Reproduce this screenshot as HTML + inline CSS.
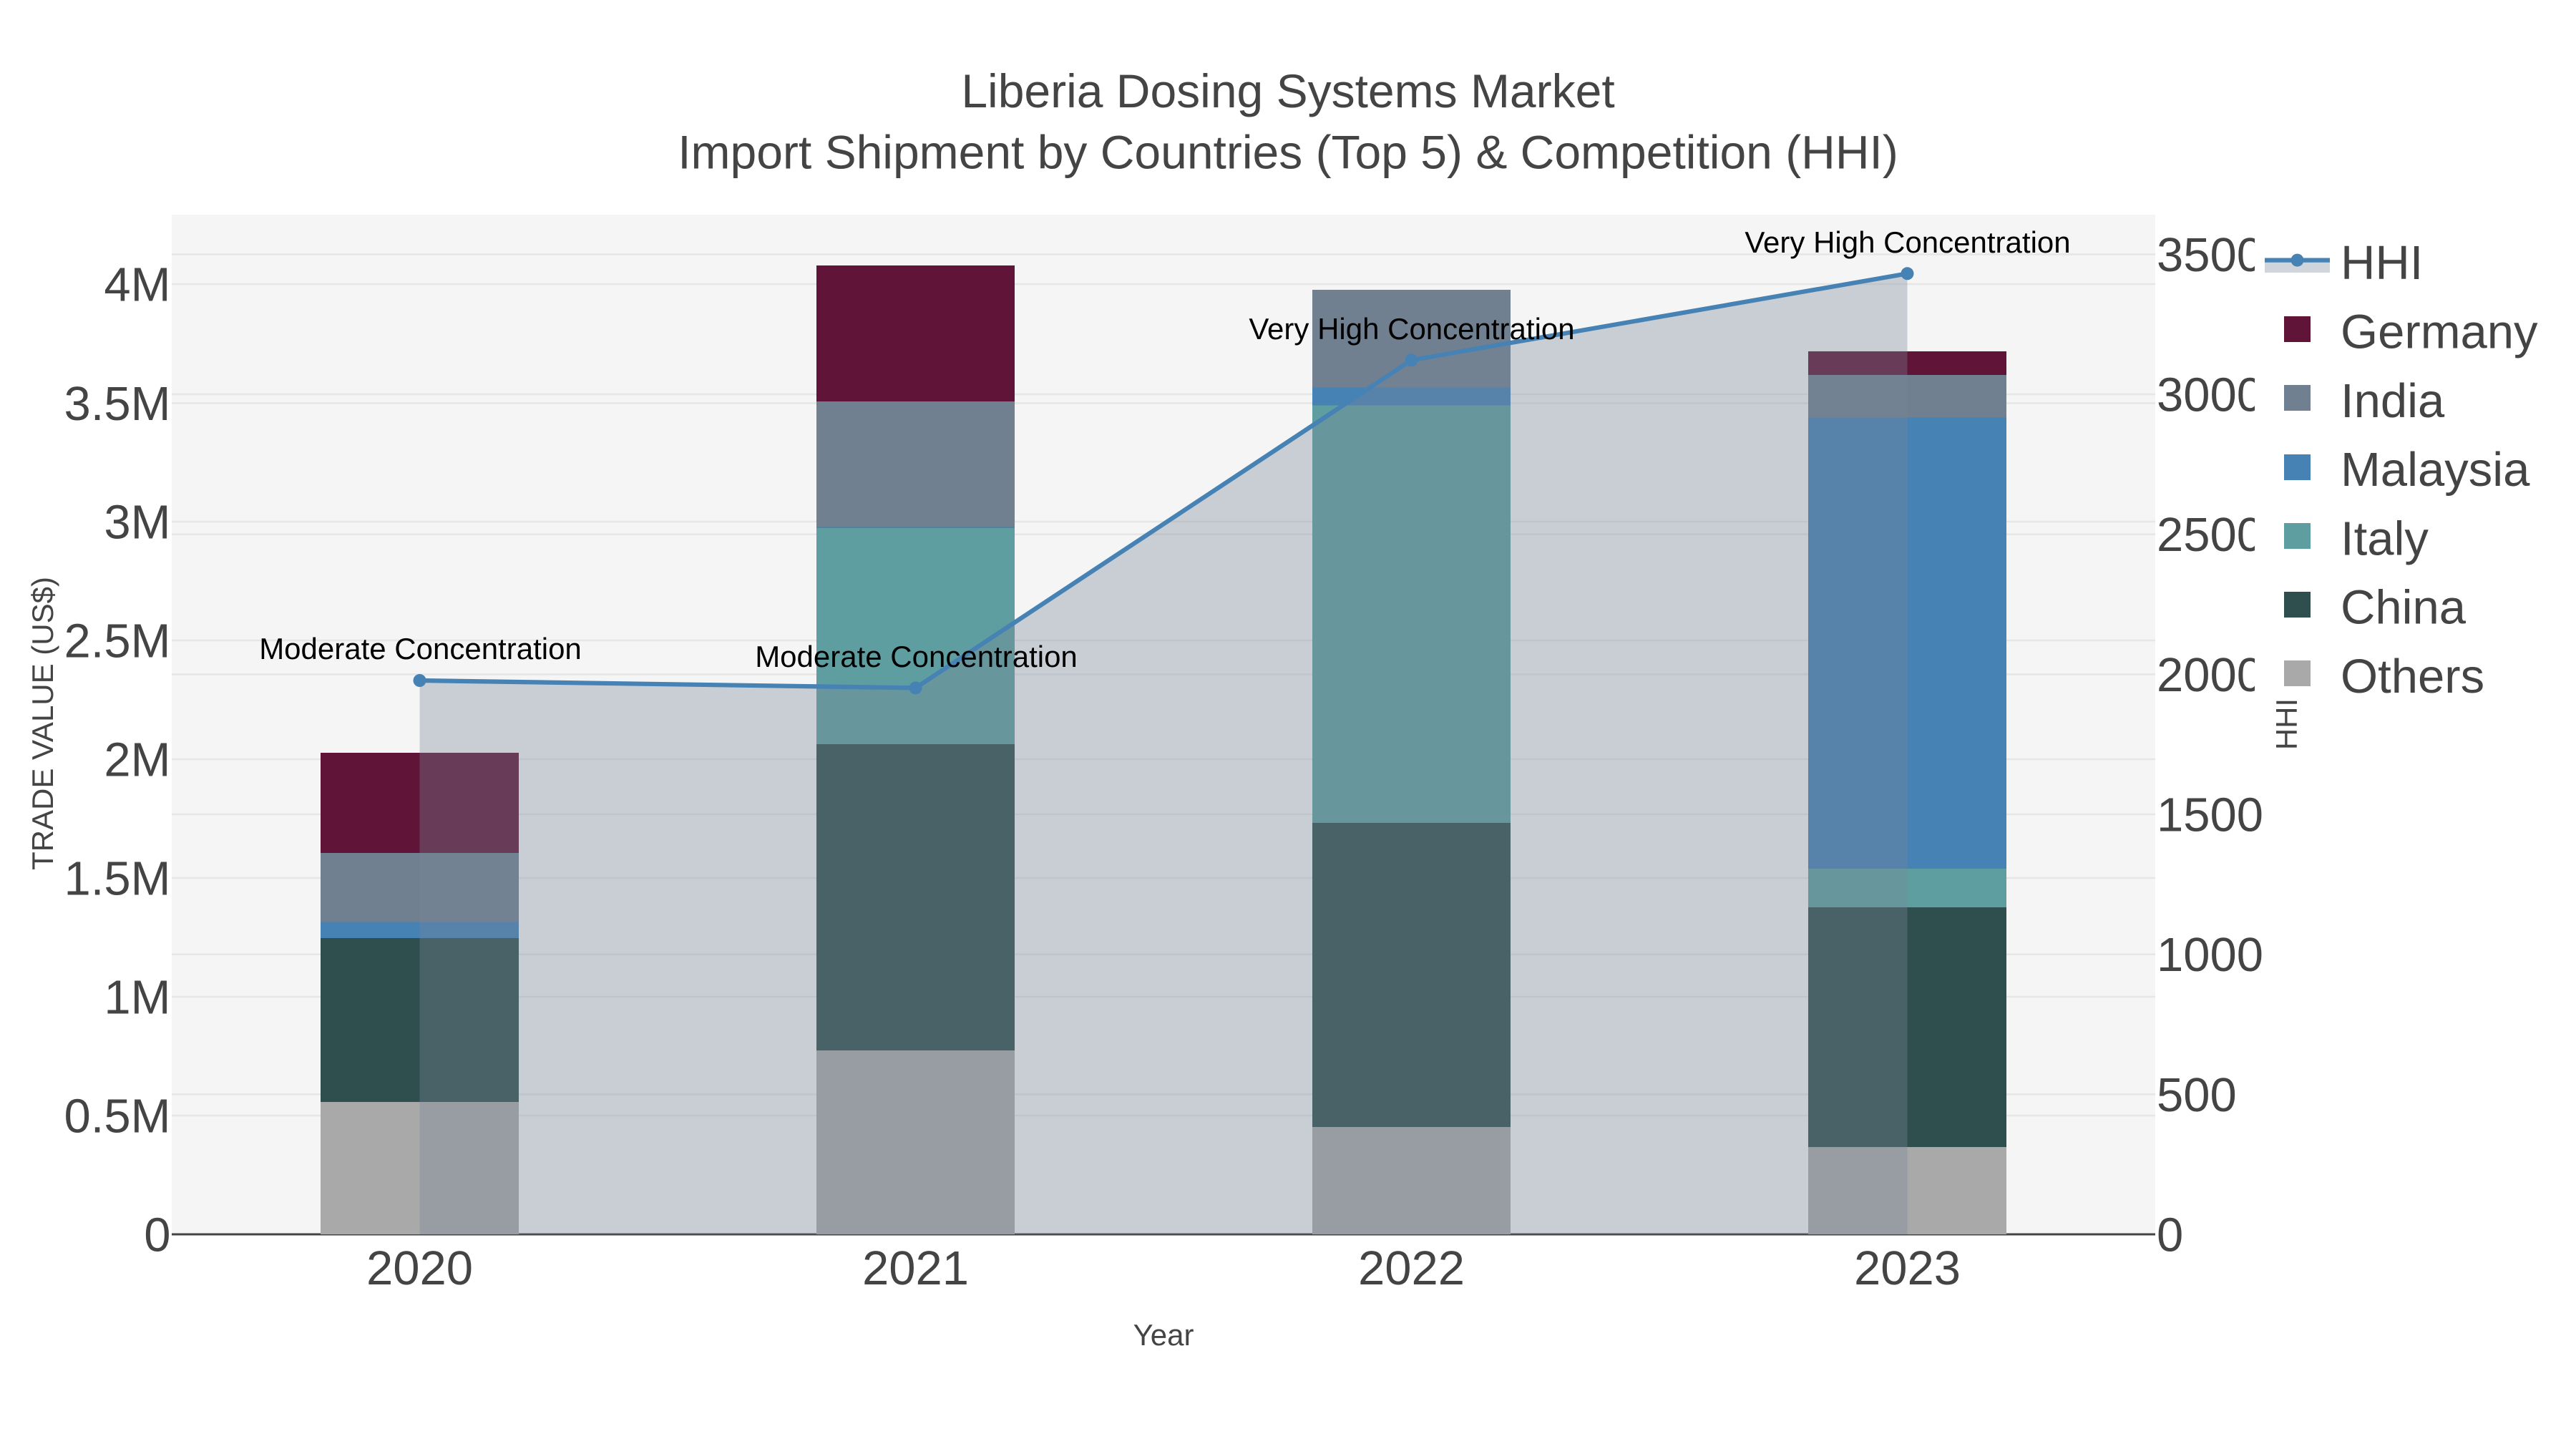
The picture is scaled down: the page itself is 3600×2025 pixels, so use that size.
<!DOCTYPE html>
<html lang="en">
<head>
<meta charset="utf-8">
<title>Liberia Dosing Systems Market</title>
<style>
html,body{margin:0;padding:0;background:#fff;width:3600px;height:2025px;overflow:hidden}
svg{display:block}
text{font-family:"Liberation Sans",Arial,sans-serif;fill:#444}
.t{font-size:67px}
.a{font-size:42px}
.n{font-size:42px;fill:#000;text-anchor:middle}
.l{font-size:67px}
.title{font-size:66px;text-anchor:middle}
.g{stroke:#e6e6e6;stroke-width:2.6;fill:none}
.r{text-anchor:end}
.c{text-anchor:middle}
rect.b{shape-rendering:crispEdges}
</style>
</head>
<body>
<svg xmlns="http://www.w3.org/2000/svg" width="3600" height="2025" viewBox="0 0 3600 2025">
<rect width="3600" height="2025" fill="#fff"/>
<rect x="240" y="300" width="2772" height="1425" fill="#f5f5f5"/>

<!-- gridlines -->
<g class="g">
<path d="M240 1559H3012M240 1393H3012M240 1227H3012M240 1061H3012M240 895H3012M240 729H3012M240 563.4H3012M240 397H3012"/>
<path d="M240 1529.3H3012M240 1333.7H3012M240 1138H3012M240 942.4H3012M240 746.7H3012M240 551H3012M240 355.4H3012"/>
</g>
<path d="M240 1725H3012" stroke="#444" stroke-width="3" fill="none"/>

<!-- bars 2020 -->
<rect class="b" x="448" y="1540" width="277" height="185" fill="#a9a9a9"/>
<rect class="b" x="448" y="1311" width="277" height="229" fill="#2f4f4f"/>
<rect class="b" x="448" y="1288.3" width="277" height="22.7" fill="#4682b4"/>
<rect class="b" x="448" y="1192" width="277" height="96.3" fill="#708090"/>
<rect class="b" x="448" y="1052" width="277" height="140" fill="#601437"/>
<!-- bars 2021 -->
<rect class="b" x="1141" y="1468" width="277" height="257" fill="#a9a9a9"/>
<rect class="b" x="1141" y="1040" width="277" height="428" fill="#2f4f4f"/>
<rect class="b" x="1141" y="738" width="277" height="302" fill="#5f9ea0"/>
<rect class="b" x="1141" y="736.5" width="277" height="1.5" fill="#4682b4"/>
<rect class="b" x="1141" y="561" width="277" height="175.5" fill="#708090"/>
<rect class="b" x="1141" y="371" width="277" height="190" fill="#601437"/>
<!-- bars 2022 -->
<rect class="b" x="1834" y="1575" width="277" height="150" fill="#a9a9a9"/>
<rect class="b" x="1834" y="1150" width="277" height="425" fill="#2f4f4f"/>
<rect class="b" x="1834" y="566.7" width="277" height="583.3" fill="#5f9ea0"/>
<rect class="b" x="1834" y="541.3" width="277" height="25.4" fill="#4682b4"/>
<rect class="b" x="1834" y="405" width="277" height="136.3" fill="#708090"/>
<!-- bars 2023 -->
<rect class="b" x="2527" y="1603" width="277" height="122" fill="#a9a9a9"/>
<rect class="b" x="2527" y="1268" width="277" height="335" fill="#2f4f4f"/>
<rect class="b" x="2527" y="1214" width="277" height="54" fill="#5f9ea0"/>
<rect class="b" x="2527" y="583.3" width="277" height="630.7" fill="#4682b4"/>
<rect class="b" x="2527" y="524" width="277" height="59.3" fill="#708090"/>
<rect class="b" x="2527" y="491" width="277" height="33" fill="#601437"/>

<!-- HHI area -->
<path d="M586.5 951L1279.5 961.4L1972.5 503.3L2665.5 382.3V1725H586.5Z" fill="#778899" fill-opacity=".35"/>
<!-- HHI line -->
<path d="M586.5 951L1279.5 961.4L1972.5 503.3L2665.5 382.3" fill="none" stroke="#4682b4" stroke-width="6.2"/>
<g fill="#4682b4">
<circle cx="586.5" cy="951" r="9"/>
<circle cx="1279.5" cy="961.4" r="9"/>
<circle cx="1972.5" cy="503.3" r="9"/>
<circle cx="2665.5" cy="382.3" r="9"/>
</g>

<!-- annotations -->
<text class="n" x="587.5" y="921">Moderate Concentration</text>
<text class="n" x="1280.5" y="932">Moderate Concentration</text>
<text class="n" x="1973" y="474">Very High Concentration</text>
<text class="n" x="2666" y="353">Very High Concentration</text>

<!-- left ticks -->
<g class="t">
<text class="r" x="238.5" y="1748.5">0</text>
<text class="r" x="238.5" y="1582.5">0.5M</text>
<text class="r" x="238.5" y="1416.5">1M</text>
<text class="r" x="238.5" y="1250.5">1.5M</text>
<text class="r" x="238.5" y="1084.5">2M</text>
<text class="r" x="238.5" y="918.5">2.5M</text>
<text class="r" x="238.5" y="752.5">3M</text>
<text class="r" x="238.5" y="586.9">3.5M</text>
<text class="r" x="238.5" y="420.5">4M</text>
</g>
<!-- right ticks -->
<g class="t">
<text x="3014" y="1748.5">0</text>
<text x="3014" y="1552.8">500</text>
<text x="3014" y="1357.2">1000</text>
<text x="3014" y="1161.5">1500</text>
<text x="3014" y="965.9">2000</text>
<text x="3014" y="770.2">2500</text>
<text x="3014" y="574.5">3000</text>
<text x="3014" y="378.9">3500</text>
</g>
<!-- x ticks -->
<g class="t">
<text class="c" x="586.5" y="1795">2020</text>
<text class="c" x="1279.5" y="1795">2021</text>
<text class="c" x="1972.5" y="1795">2022</text>
<text class="c" x="2665.5" y="1795">2023</text>
</g>

<!-- legend -->
<rect x="3151" y="300" width="449" height="685" fill="#fff"/>
<rect x="3165" y="363.6" width="91" height="17.4" fill="#778899" fill-opacity=".35"/>
<path d="M3165 363.6H3256" stroke="#4682b4" stroke-width="6.2" fill="none"/>
<circle cx="3210.5" cy="363.6" r="9" fill="#4682b4"/>
<rect class="b" x="3192" y="442" width="37" height="36" fill="#601437"/>
<rect class="b" x="3192" y="538" width="37" height="36" fill="#708090"/>
<rect class="b" x="3192" y="635" width="37" height="36" fill="#4682b4"/>
<rect class="b" x="3192" y="731" width="37" height="36" fill="#5f9ea0"/>
<rect class="b" x="3192" y="827" width="37" height="36" fill="#2f4f4f"/>
<rect class="b" x="3192" y="923" width="37" height="36" fill="#a9a9a9"/>
<g class="l">
<text x="3271" y="390">HHI</text>
<text x="3271" y="486.5">Germany</text>
<text x="3271" y="583">India</text>
<text x="3271" y="679">Malaysia</text>
<text x="3271" y="775.5">Italy</text>
<text x="3271" y="871.5">China</text>
<text x="3271" y="968">Others</text>
</g>

<!-- axis titles -->
<text class="a c" x="1626" y="1880">Year</text>
<text class="a c" transform="translate(74 1011) rotate(-90)">TRADE VALUE (US$)</text>
<text class="a c" transform="translate(3210 1012) rotate(-90)">HHI</text>

<!-- title -->
<text class="title" x="1800" y="150">Liberia Dosing Systems Market</text>
<text class="title" x="1800" y="235.5">Import Shipment by Countries (Top 5) &amp; Competition (HHI)</text>
</svg>
</body>
</html>
